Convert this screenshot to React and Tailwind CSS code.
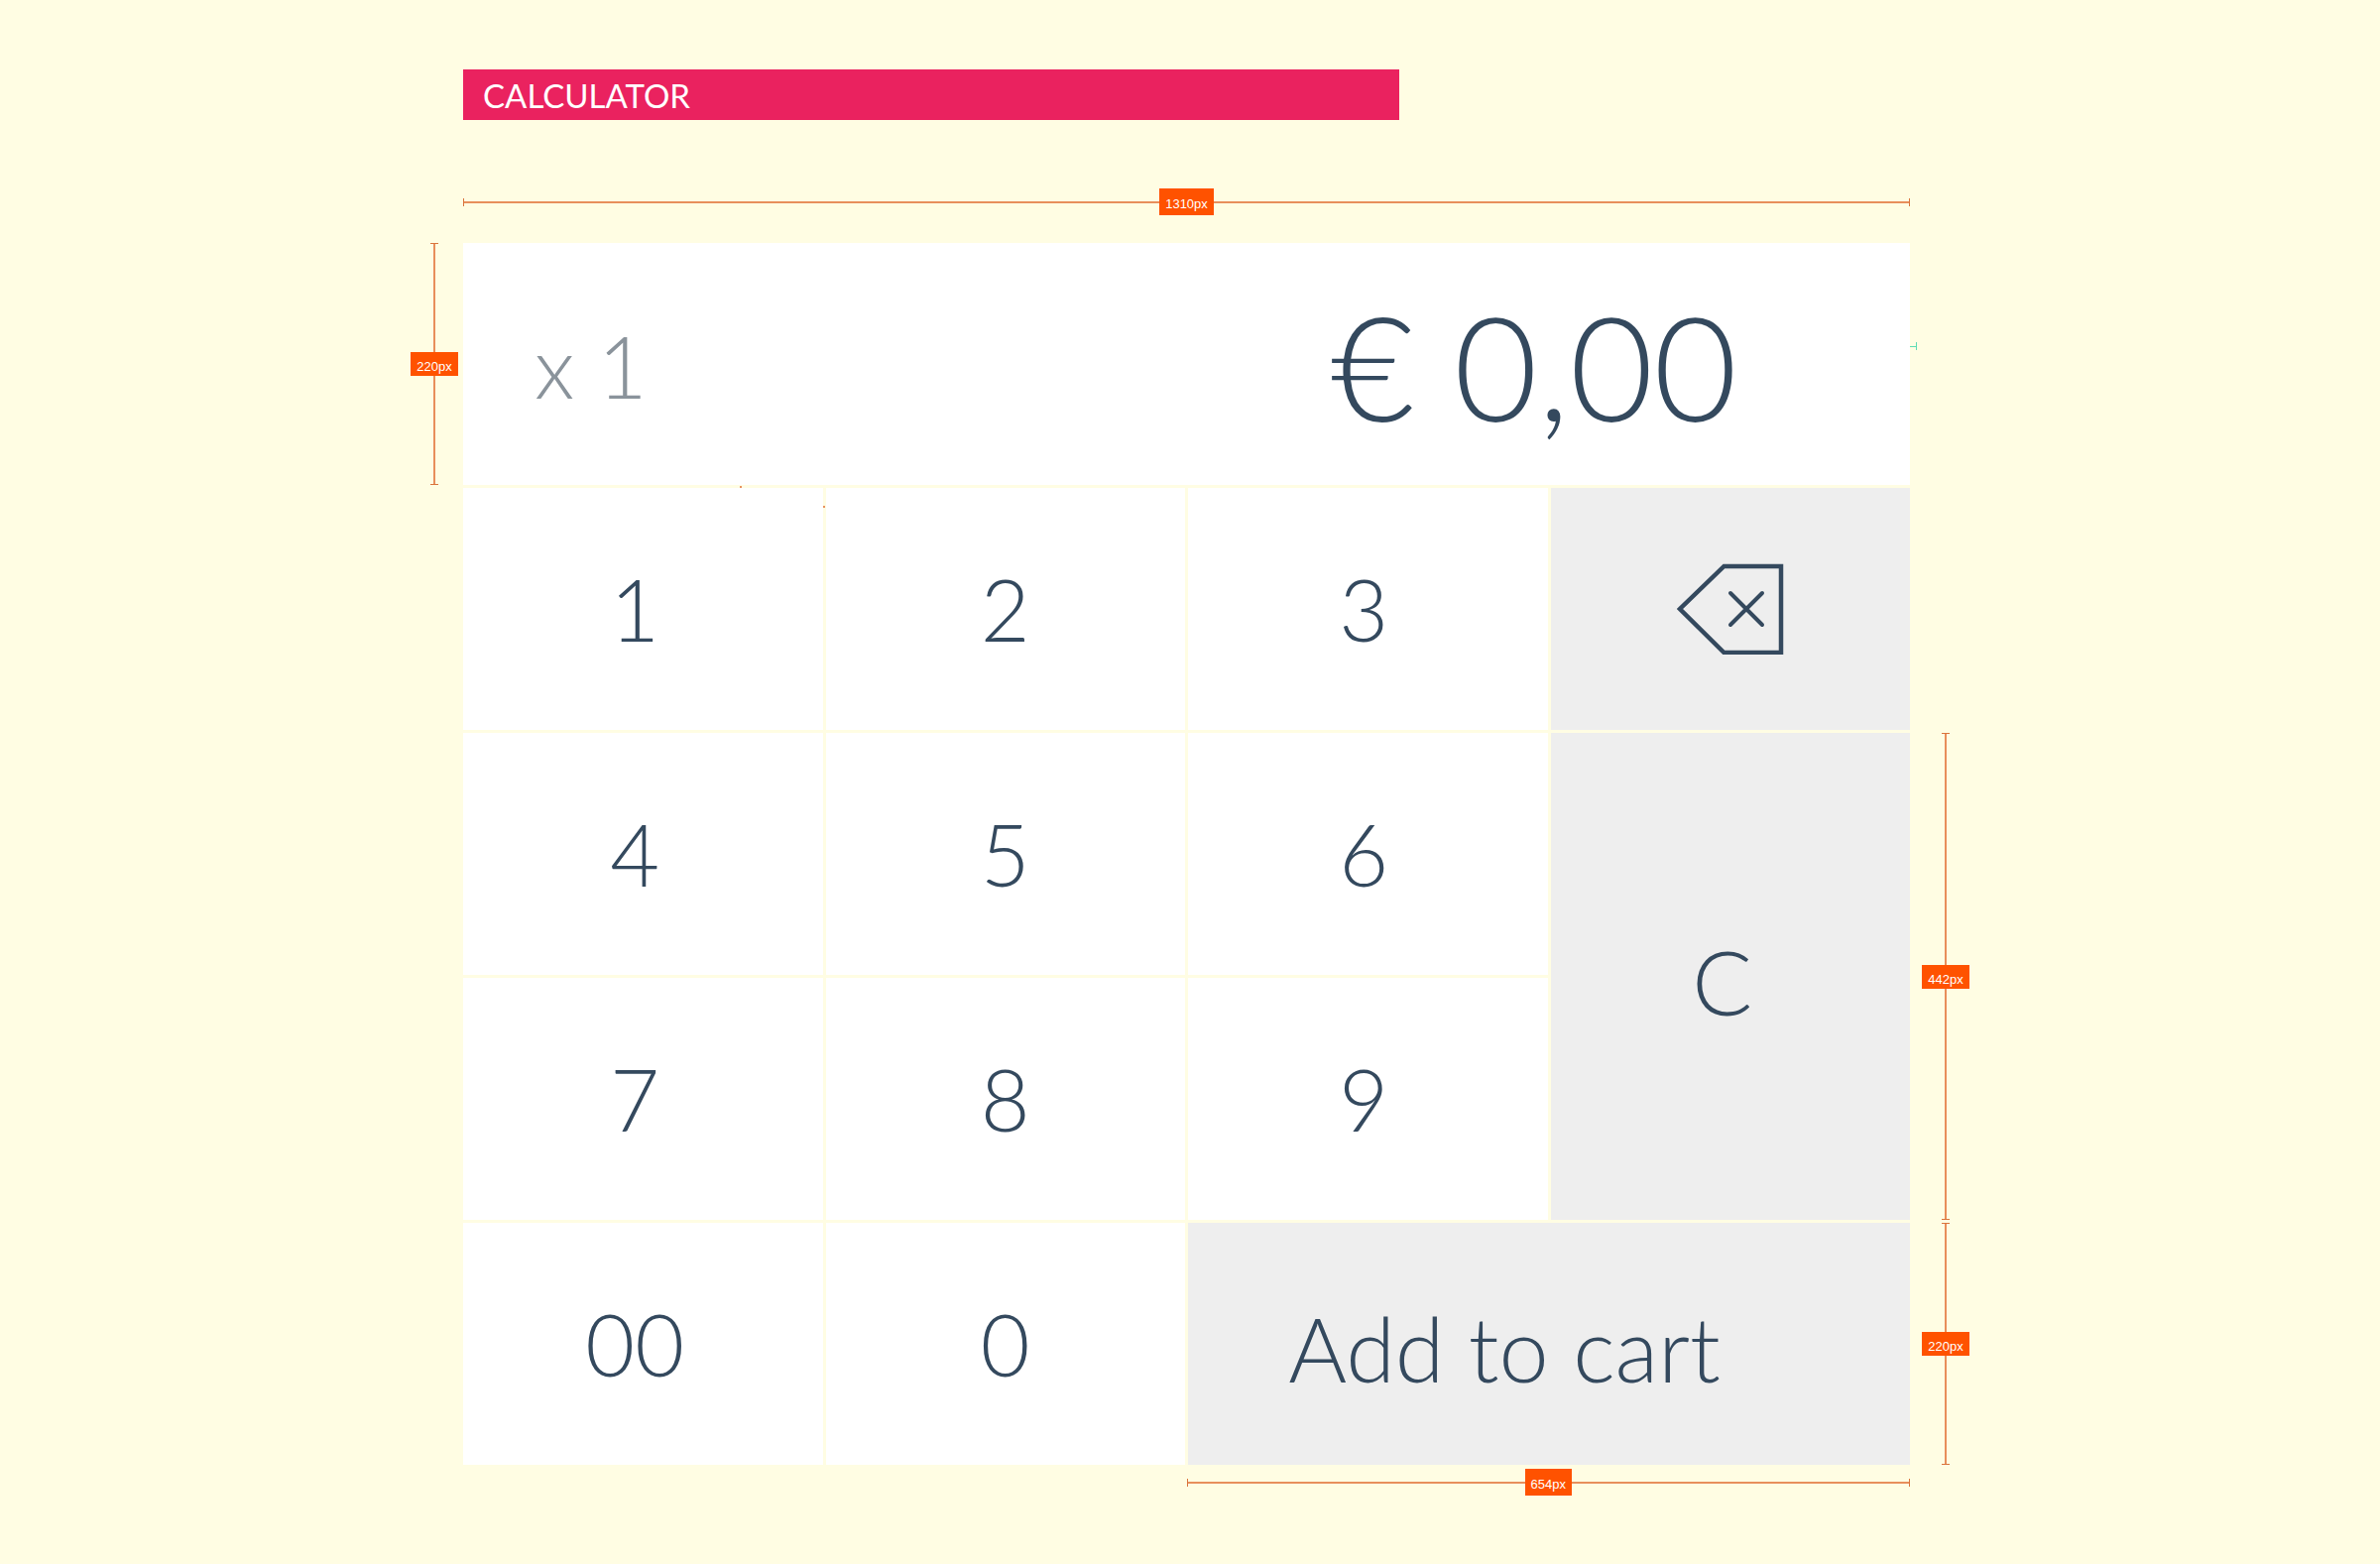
import { useState } from 'react';

const KEYS = ['1', '2', '3', 'back', '4', '5', '6', 'C', '7', '8', '9', '00', '0', 'cart'];

const formatAmount = (cents) => {
  const euros = Math.floor(cents / 100);
  const rest = String(cents % 100).padStart(2, '0');
  return `€ ${euros},${rest}`;
};

function HorizontalMeasure({ label }) {
  return (
    <div className="flex items-center">
      <div className="w-px h-2 bg-[#d9743c]"></div>
      <div className="flex-1 h-0.5 bg-[#e88f5c]"></div>
      <span className="flex h-[27px] items-center bg-[#ff5200] px-[6px] pt-1 font-['Liberation_Sans',sans-serif] text-[13px] text-white">
        {label}
      </span>
      <div className="flex-1 h-0.5 bg-[#e88f5c]"></div>
      <div className="w-px h-2 bg-[#d9743c]"></div>
    </div>
  );
}

function VerticalMeasure({ label, className }) {
  return (
    <div className={`flex flex-col items-center w-12 ${className}`}>
      <div className="h-px w-2 bg-[#d9743c]"></div>
      <div className="flex-1 w-0.5 bg-[#e88f5c]"></div>
      <span className="flex h-6 w-full items-center justify-center bg-[#ff5200] pt-1.5 font-['Liberation_Sans',sans-serif] text-[13px] text-white">
        {label}
      </span>
      <div className="flex-1 w-0.5 bg-[#e88f5c]"></div>
      <div className="h-px w-2 bg-[#d9743c]"></div>
    </div>
  );
}

function BackspaceIcon() {
  return (
    <svg className="w-27 h-23" viewBox="0 0 108 92" fill="none" stroke="currentColor" strokeWidth="4.5">
      <path d="M105 3H47.5L3 46L47.5 90H105Z" />
      <path d="M54 30L86 62M86 30L54 62" strokeLinecap="round" strokeWidth="4" />
    </svg>
  );
}

export default function App() {
  const [cents, setCents] = useState(0);

  const handleKey = (key) => {
    if (key === 'C' || key === 'cart') return setCents(0);
    if (key === 'back') return setCents(Math.floor(cents / 10));
    setCents(Number(`${cents}${key}`) % 100000000);
  };

  const getKeyStyle = (key) => {
    if (key === 'back') return 'bg-[#eeeeee] text-[86px]';
    if (key === 'C') return 'bg-[#eeeeee] row-span-2 pt-2 pr-4 text-[90px]';
    if (key === 'cart') return 'bg-[#eeeeee] col-span-2 pt-2 pr-[90px] text-[90px]';
    // Outer number columns sit slightly left of centre
    if (['1', '4', '7', '00'].includes(key)) return 'bg-white pr-4 text-[86px]';
    if (['3', '6', '9'].includes(key)) return 'bg-white pr-2 text-[86px]';
    return 'bg-white text-[86px]';
  };

  const getKeyContent = (key) => {
    if (key === 'back') return <BackspaceIcon />;
    if (key === 'cart') return 'Add to cart';
    return key;
  };

  return (
    <div className="min-h-screen bg-[#fffde3] pt-[70px] pb-16 font-['Lato',sans-serif] text-[#34495e]">
      <main className="mx-auto grid w-full max-w-[1572px] grid-cols-[53px_minmax(0,1fr)_60px]">
        <div className="col-start-2">
          <h1 className="flex h-[51px] w-[64.7%] items-center bg-[#ea225f] px-5 pt-0.5 text-[33px] text-white">
            CALCULATOR
          </h1>
          <div className="mt-[69px] mb-7">
            <HorizontalMeasure label="1310px" />
          </div>
        </div>

        {/* Left gutter: display height */}
        <div className="col-start-1">
          <VerticalMeasure label="220px" className="h-61" />
        </div>

        <section className="relative grid auto-rows-[minmax(244px,auto)] grid-cols-4 gap-[3px]">
          <div className="col-span-4 flex items-center justify-between bg-white pt-1 pr-[174px] pl-[72px] font-light">
            <span className="text-[86px] leading-none text-[#8a939b]">x 1</span>
            <output className="text-[146px] leading-none">{formatAmount(cents)}</output>
          </div>

          {KEYS.map((key) => (
            <button
              key={key}
              type="button"
              aria-label={key === 'back' ? 'Backspace' : undefined}
              onClick={() => handleKey(key)}
              className={`flex items-center justify-center leading-none font-light ${getKeyStyle(key)}`}
            >
              {getKeyContent(key)}
            </button>
          ))}

          {/* Loose guide marks */}
          <i className="absolute top-[245px] left-[279px] size-0.5 bg-[#e8935f]"></i>
          <i className="absolute top-[265px] left-[363px] size-0.5 bg-[#e8935f]"></i>
          <div className="absolute top-[100px] left-full flex items-center">
            <i className="h-px w-1.5 bg-[#5fdcb4]"></i>
            <i className="h-2 w-px bg-[#5fdcb4]"></i>
          </div>
        </section>

        {/* Right gutter: clear key and cart key heights */}
        <div className="flex flex-col items-end justify-end gap-[3px]">
          <VerticalMeasure label="442px" className="h-[491px]" />
          <VerticalMeasure label="220px" className="h-61" />
        </div>

        <div className="col-start-2 mt-1 ml-[50%]">
          <HorizontalMeasure label="654px" />
        </div>
      </main>
    </div>
  );
}
